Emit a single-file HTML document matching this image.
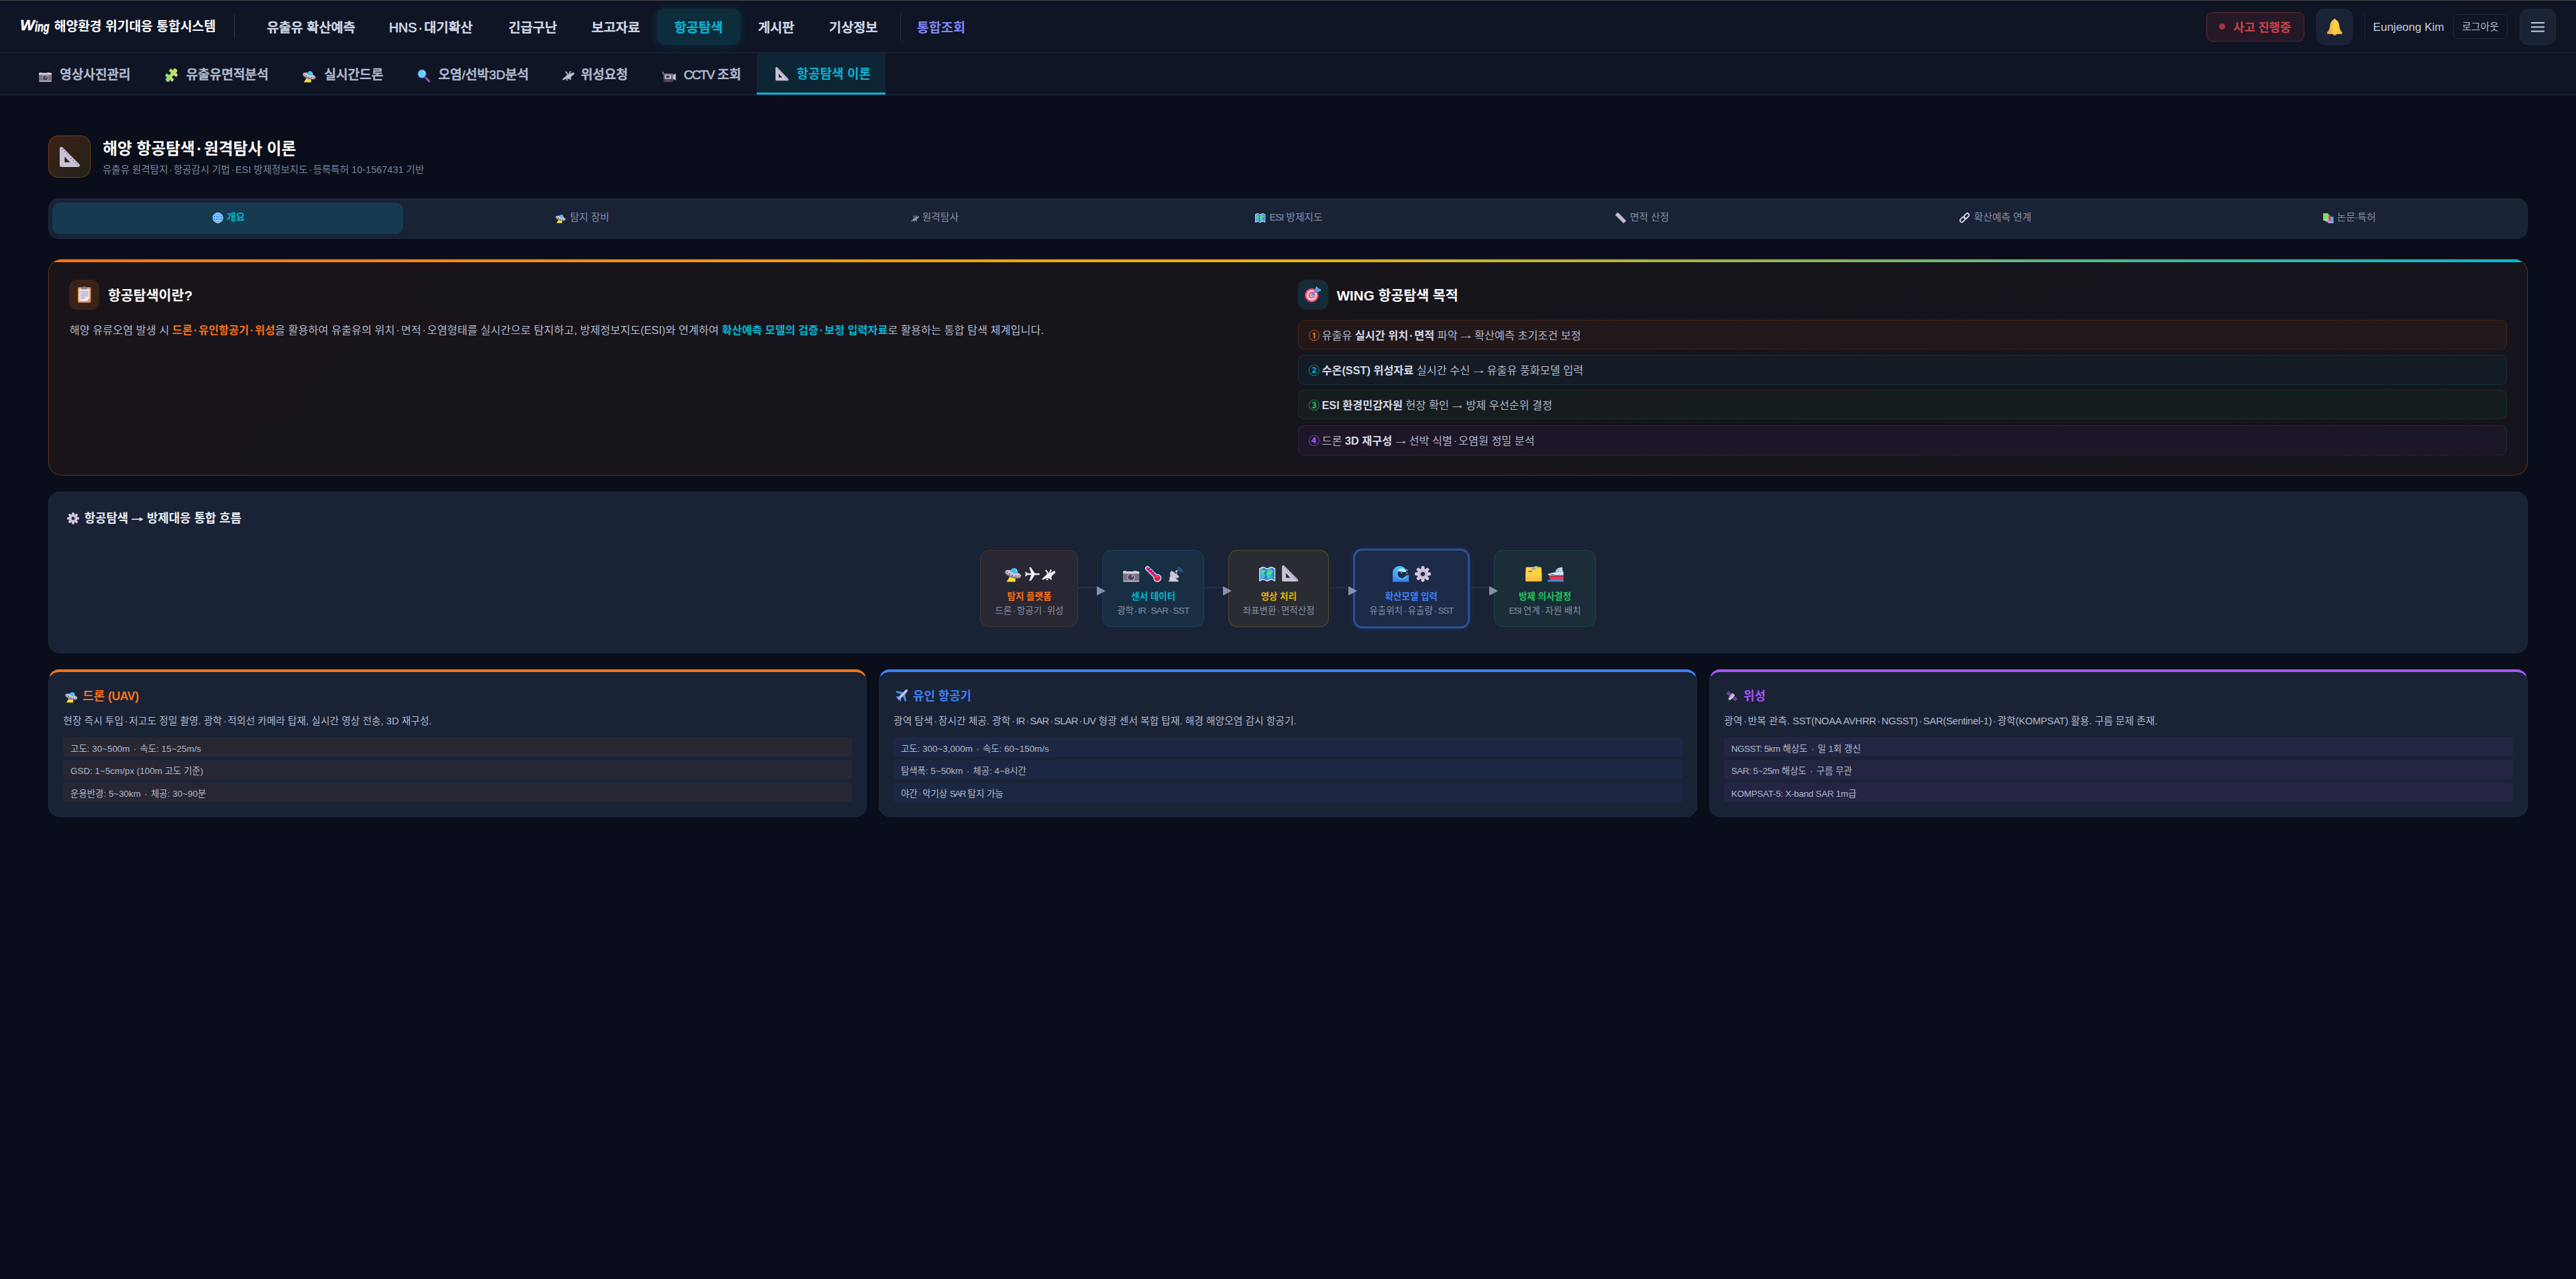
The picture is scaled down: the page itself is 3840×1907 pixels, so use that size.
<!DOCTYPE html>
<html lang="ko">
<head>
<meta charset="utf-8">
<title>해양환경 위기대응 통합시스템</title>
<style>
:root{
  --bg0:#0a0e1a;--bg1:#0f1524;--bg2:#121929;--bg3:#1a2236;--bgH:#1e2844;
  --bd:#1e2a42;--bdL:#2a3a5c;--t1:#edf0f7;--t2:#b0b8cc;--t3:#8690a6;
  --cyan:#06b6d4;--blue:#3b82f6;--red:#ef4444;--orange:#f97316;--yellow:#eab308;--green:#22c55e;--purple:#a855f7;
}
*{box-sizing:border-box;margin:0;padding:0}
html{zoom:1.5;background:var(--bg0);overflow:hidden}
body{width:2560px;height:1271.33px;overflow:hidden;background:var(--bg0);color:var(--t1);
  font-family:"Liberation Sans","Noto Sans CJK KR",sans-serif;font-size:13px;line-height:1.5;position:relative}
svg.ic{position:absolute;display:block;overflow:visible}
.ov{position:absolute;left:0;top:0;width:0;height:0;z-index:9}
i.d{font-style:normal;margin:0 .114em}
b{font-weight:700}
.abs{position:absolute}

/* ---------- top nav ---------- */
.topline{position:absolute;left:0;top:0;width:100%;height:.67px;background:#444546;z-index:5}
.nav{position:absolute;left:0;top:0;width:100%;height:52.67px;background:var(--bg1);border-bottom:1px solid var(--bd)}
.logo{position:absolute;left:20px;top:0;height:52px;display:flex;align-items:center;font-weight:700;font-size:12.85px;color:#fff;white-space:nowrap}
.logo .w{position:relative;display:inline-block;width:33.8px;height:24px;font-style:italic;font-weight:700;-webkit-text-stroke:.3px #fff}
.logo .w b,.logo .w i{position:absolute;top:0;line-height:24px;transform-origin:0 50%;font-style:italic}
.logo .w b{left:.2px;font-size:14.7px;transform:scaleX(1.04);top:-.8px}
.logo .w i{left:14.6px;font-size:12.9px;transform:scaleX(.74);top:.5px}
.logo .tx{position:relative;top:1.2px}
.vsep{position:absolute;left:232.4px;top:14.5px;width:1px;height:24px;background:#2a3a5c}
.menu{position:absolute;left:0;top:8.4px;height:36px}
.menu span{position:absolute;top:0;display:block;padding:1.2px 17.57px 0;height:36px;line-height:36px;font-size:13.1px;font-weight:500;-webkit-text-stroke:.42px currentColor;color:#d3d9e8;border-radius:8px;white-space:nowrap}
.menu span.on{color:var(--cyan);background:rgba(6,182,212,.14);box-shadow:0 0 10px rgba(6,182,212,.16)}
.menu span.tot{color:#8187f5;font-weight:700;-webkit-text-stroke:0;border-left:1px solid #232c55;border-radius:8px 0 0 8px}

.inc{position:absolute;left:2192.9px;top:12px;width:97px;height:29px;border:1px solid rgba(239,68,68,.3);background:rgba(239,68,68,.1);border-radius:6px;color:#cb4047;font-size:11.7px;font-weight:500;-webkit-text-stroke:.35px currentColor;white-space:nowrap}
.inc .dot{position:absolute;left:11.9px;top:10.6px;width:6px;height:6px;border-radius:50%;background:#a5383f}
.inc .tx{position:absolute;left:26px;top:0;line-height:27px;padding-top:1.1px}
.sqb{position:absolute;top:8.6px;width:35.8px;height:35.8px;background:var(--bg3);border:1px solid var(--bd);border-radius:8px}
.usep{position:absolute;left:2350.2px;top:14px;width:.67px;height:24.6px;background:#1e2a42}
.uname{position:absolute;left:2358.4px;top:0;height:52px;line-height:52px;font-size:11.35px;letter-spacing:0;color:#c8cfe0;white-space:nowrap;padding-top:1px}
.logout{position:absolute;left:2438.1px;top:14px;width:53.9px;height:24.4px;border:1px solid var(--bd);border-radius:5px;font-size:10px;line-height:22.4px;color:#b4bccf;text-align:center;padding-top:.9px}

/* ---------- sub nav ---------- */
.sub{position:absolute;left:0;top:52.67px;width:100%;height:41.7px;background:var(--bg1);border-bottom:1px solid var(--bd)}
.sub .t{position:absolute;top:0;height:40.6px;line-height:40.6px;font-size:12.72px;font-weight:500;-webkit-text-stroke:.42px currentColor;color:#b3bbd0;white-space:nowrap;padding-top:2.1px}
.sub .onbg{position:absolute;left:752px;top:0;width:128px;height:41px;background:rgba(6,182,212,.1);border-bottom:2px solid var(--cyan)}
.sub .on{color:var(--cyan);font-weight:700;-webkit-text-stroke:0;padding-top:1.1px}

/* ---------- page header ---------- */
.hicon{position:absolute;left:48.2px;top:134.6px;width:42px;height:42px;border-radius:10px;border:1px solid rgba(249,115,22,.34);background:linear-gradient(135deg,rgba(249,115,22,.2),rgba(234,179,8,.12))}
.htitle{position:absolute;left:102.2px;top:135.2px;font-size:15.8px;font-weight:700;color:#fff;line-height:26px;white-space:nowrap}
.hsub{position:absolute;left:102px;top:160.8px;font-size:9.68px;color:#7a859f;line-height:16px;white-space:nowrap}

/* ---------- tab bar ---------- */
.tabs{position:absolute;left:48.2px;top:197px;width:2463.8px;height:40px;background:var(--bg3);border:1px solid var(--bd);border-radius:10px;padding:3.4px;display:flex;gap:2.8px}
.tabs div.on{width:348.2px;height:31.7px;border-radius:8px;background:rgba(6,182,212,.17)}
.tt{position:absolute;top:207.3px;font-size:9.85px;line-height:18px;color:var(--t3);white-space:nowrap}
.tt.on{color:var(--cyan);font-weight:700}
i.dn{font-style:normal;margin:0 -.16em}
i.ar{font-style:normal;display:inline-block;transform:translateY(-.09em) scaleX(1.5)}

/* ---------- intro card ---------- */
.intro{position:absolute;left:48.2px;top:257.2px;width:2463.8px;height:215.2px;border-radius:13px;border:1px solid rgba(249,115,22,.31);background:linear-gradient(135deg,rgba(249,115,22,.063) 0%,rgba(240,150,60,.05) 100%),var(--bg0);overflow:hidden}
.intro:before{content:"";position:absolute;left:0;top:0;right:0;height:3px;background:linear-gradient(90deg,#f97316 0%,#eab308 50%,#06b6d4 100%)}
.ibox{position:absolute;width:30px;height:30px;border-radius:8px;top:20px}
.ih{position:absolute;top:20px;height:30px;line-height:30px;font-size:13.72px;font-weight:700;color:#fff;white-space:nowrap;padding-top:1px}
.ip{position:absolute;left:20.3px;top:61px;font-size:10.87px;line-height:19px;color:var(--t2);white-space:nowrap}
.ip b.o{color:var(--orange)} .ip b.c{color:var(--cyan)}
.li{position:absolute;left:1241.2px;width:1201px;height:29.9px;border-radius:6px;border:1px solid;font-size:10.85px;line-height:27.5px;color:var(--t2);padding:1.5px 0 0 9.8px;white-space:nowrap}
.li b{color:#d3d8e7}
.li .n{margin-right:-.72px;font-weight:700}

/* ---------- flow card ---------- */
.flow{position:absolute;left:48.2px;top:488.6px;width:2463.8px;height:160.8px;border-radius:11px;border:1px solid var(--bd);background:var(--bg3)}
.fh{position:absolute;left:34.9px;top:17.6px;font-size:11.88px;font-weight:700;color:var(--t1);line-height:18px;white-space:nowrap}
.fh .ar{-webkit-text-stroke:.4px currentColor}
.fb{position:absolute;top:57.6px;height:76.2px;border-radius:9px;border:1px solid;text-align:center;white-space:nowrap}
.fb .e{position:absolute;left:0;right:0;top:14px;height:20px}
.fb .e .ic{position:absolute;top:0}
.fb .a{position:absolute;left:0;right:0;top:38.6px;font-size:9px;font-weight:700;line-height:14px}
.fb .s{position:absolute;left:0;right:0;top:52.6px;font-size:9px;line-height:14px;color:var(--t3)}
.cn{position:absolute;top:95.07px;height:.67px;width:18.6px;background:#2e3a56;z-index:2}
.cn:after{content:"";position:absolute;right:-8.7px;top:-1.7px;border-left:8.8px solid #8791aa;border-top:4.75px solid transparent;border-bottom:4.75px solid transparent}

/* ---------- platform cards ---------- */
.pc{position:absolute;top:665.3px;width:813.3px;height:146.8px;border-radius:11px;border:1px solid var(--bd);border-top:3px solid;background:var(--bg3)}
.pc .h{position:absolute;left:33.3px;top:14.8px;font-size:11.9px;font-weight:700;line-height:19.5px;white-space:nowrap}
.pc .p{position:absolute;left:14px;top:40.6px;font-size:9.85px;line-height:17px;color:var(--t2);white-space:nowrap}
.pc .r{position:absolute;left:14px;right:14px;height:19.5px;border-radius:3px;font-size:8.95px;line-height:19.5px;color:var(--t2);padding:1.8px 0 0 7.2px;white-space:nowrap}
</style>
</head>
<body>
<div class="nav">
  <div class="logo"><span class="w"><b>W</b><i>ing</i></span> <span class="tx">해양환경 위기대응 통합시스템</span></div>
  <div class="vsep"></div>
  <div class="menu">
    <span style="left:247.56px">유출유 확산예측</span>
    <span style="left:369.03px">HNS<i class="d">·</i>대기확산</span>
    <span style="left:487.76px">긴급구난</span>
    <span style="left:570.23px">보고자료</span>
    <span class="on" style="left:652.63px">항공탐색</span>
    <span style="left:735.76px">게시판</span>
    <span style="left:806.50px">기상정보</span>
    <span class="tot" style="left:894.60px;padding-left:15.9px">통합조회</span>
  </div>
  <div class="inc"><span class="dot"></span><span class="tx">사고 진행중</span></div>
  <div class="sqb" style="left:2302.1px"></div>
  <div class="usep"></div>
  <div class="uname">Eunjeong Kim</div>
  <div class="logout">로그아웃</div>
  <div class="sqb" style="left:2504px"><span class="abs" style="left:10.6px;top:12.6px;width:13.6px;height:1.4px;background:#c8cee0;box-shadow:0 4.2px 0 #c8cee0,0 8.4px 0 #c8cee0"></span></div>
</div>
<div class="topline"></div>

<div class="sub">
  <div class="t" style="left:59.5px">영상사진관리</div>
  <div class="t" style="left:185px">유출유면적분석</div>
  <div class="t" style="left:322.3px">실시간드론</div>
  <div class="t" style="left:435.6px">오염/선박3D분석</div>
  <div class="t" style="left:577.3px">위성요청</div>
  <div class="t" style="left:679.5px"><span style="letter-spacing:-1.15px">CCTV</span> 조회</div>
  <div class="onbg"></div>
  <div class="t on" style="left:791.6px">항공탐색 이론</div>
</div>

<div class="hicon"></div>
<div class="htitle">해양 항공탐색<i class="d">·</i>원격탐사 이론</div>
<div class="hsub">유출유 원격탐지<i class="d">·</i>항공감시 기법<i class="d">·</i>ESI 방제정보지도<i class="d">·</i>등록특허 10-1567431 기반</div>

<div class="tabs"><div class="on"></div></div>
<div class="tt on" style="left:225.2px">개요</div>
<div class="tt" style="left:566.5px">탐지 장비</div>
<div class="tt" style="left:916.5px">원격탐사</div>
<div class="tt" style="left:1261.6px"><span style="letter-spacing:-.7px">ESI</span> 방제지도</div>
<div class="tt" style="left:1619.8px">면적 산정</div>
<div class="tt" style="left:1961.7px">확산예측 연계</div>
<div class="tt" style="left:2322.4px">논문<i class="dn"><i class="d">·</i></i>특허</div>

<div class="intro">
  <div class="ibox" style="left:20px;background:rgba(249,115,22,.15)"></div>
  <div class="ih" style="left:58.4px">항공탐색이란?</div>
  <div class="ip">해양 유류오염 발생 시 <b class="o">드론<i class="d">·</i>유인항공기<i class="d">·</i>위성</b>을 활용하여 유출유의 위치<i class="d">·</i>면적<i class="d">·</i>오염형태를 실시간으로 탐지하고, 방제정보지도(ESI)와 연계하여 <b class="c">확산예측 모델의 검증<i class="d">·</i>보정 입력자료</b>로 활용하는 통합 탐색 체계입니다.</div>

  <div class="ibox" style="left:1241.2px;background:rgba(6,182,212,.15)"></div>
  <div class="ih" style="left:1279.6px">WING 항공탐색 목적</div>
  <div class="li" style="top:59.9px;background:rgba(249,115,22,.05);border-color:rgba(249,115,22,.15)"><span class="n" style="color:var(--orange)">①</span> 유출유 <b>실시간 위치<i class="d">·</i>면적</b> 파악 <i class="ar">→</i> 확산예측 초기조건 보정</div>
  <div class="li" style="top:94.6px;background:rgba(6,182,212,.05);border-color:rgba(6,182,212,.15)"><span class="n" style="color:var(--cyan)">②</span> <b>수온(SST) 위성자료</b> 실시간 수신 <i class="ar">→</i> 유출유 풍화모델 입력</div>
  <div class="li" style="top:129.2px;background:rgba(34,197,94,.05);border-color:rgba(34,197,94,.15)"><span class="n" style="color:var(--green)">③</span> <b>ESI 환경민감자원</b> 현장 확인 <i class="ar">→</i> 방제 우선순위 결정</div>
  <div class="li" style="top:164.9px;background:rgba(168,85,247,.05);border-color:rgba(168,85,247,.15)"><span class="n" style="color:var(--purple)">④</span> 드론 <b>3D 재구성</b> <i class="ar">→</i> 선박 식별<i class="d">·</i>오염원 정밀 분석</div>
</div>

<div class="flow">
  <div class="fh">항공탐색 <i class="ar">→</i> 방제대응 통합 흐름</div>

  <div class="fb" style="left:925.4px;width:97.4px;background:rgba(249,115,22,.07);border-color:rgba(249,115,22,.15)">
    <div class="e"></div>
    <div class="a" style="color:var(--orange)">탐지 플랫폼</div><div class="s">드론<i class="d">·</i>항공기<i class="d">·</i>위성</div>
  </div>
  <div class="cn" style="left:1022.8px"></div>
  <div class="fb" style="left:1046.6px;width:101.4px;background:rgba(6,182,212,.085);border-color:rgba(6,182,212,.15)">
    <div class="e"></div>
    <div class="a" style="color:var(--cyan)">센서 데이터</div><div class="s" style="letter-spacing:-.4px">광학<i class="d">·</i>IR<i class="d">·</i>SAR<i class="d">·</i>SST</div>
  </div>
  <div class="cn" style="left:1148px"></div>
  <div class="fb" style="left:1172px;width:99.8px;background:rgba(234,179,8,.07);border-color:rgba(234,179,8,.24)">
    <div class="e"></div>
    <div class="a" style="color:var(--yellow)">영상 처리</div><div class="s">좌표변환<i class="d">·</i>면적산정</div>
  </div>
  <div class="cn" style="left:1272.4px"></div>
  <div class="fb" style="left:1295.6px;width:116.2px;top:56px;height:79.4px;border-width:2px;background:rgba(59,130,246,.1);border-color:rgba(59,130,246,.45);box-shadow:0 0 6px rgba(59,130,246,.18)">
    <div class="e"></div>
    <div class="a" style="color:var(--blue)">확산모델 입력</div><div class="s">유출위치<i class="d">·</i>유출량<i class="d">·</i><span style="letter-spacing:-.75px">SST</span></div>
  </div>
  <div class="cn" style="left:1412.4px"></div>
  <div class="fb" style="left:1436px;width:101px;background:rgba(34,197,94,.07);border-color:rgba(34,197,94,.15)">
    <div class="e"></div>
    <div class="a" style="color:var(--green)">방제 의사결정</div><div class="s"><span style="letter-spacing:-.9px">ESI</span> 연계<i class="d">·</i>자원 배치</div>
  </div>
</div>

<div class="pc" style="left:48.2px;border-top-color:var(--orange)">
  <div class="h" style="color:var(--orange)">드론 <span style="letter-spacing:-.35px">(UAV)</span></div>
  <div class="p">현장 즉시 투입<i class="d">·</i>저고도 정밀 촬영. 광학<i class="d">·</i>적외선 카메라 탑재, 실시간 영상 전송, 3D 재구성.</div>
  <div class="r" style="top:64.85px;background:rgba(249,115,22,.06)">고도: 30~500m <i class="d">·</i> 속도: 15~25m/s</div>
  <div class="r" style="top:87.1px;background:rgba(249,115,22,.06)">GSD: 1~5cm/px (100m 고도 기준)</div>
  <div class="r" style="top:109.9px;background:rgba(249,115,22,.06)">운용반경: 5~30km <i class="d">·</i> 체공: 30~90분</div>
</div>
<div class="pc" style="left:873.4px;border-top-color:var(--blue)">
  <div class="h" style="color:var(--blue)">유인 항공기</div>
  <div class="p">광역 탐색<i class="d">·</i>장시간 체공. 광학<i class="d">·</i><span style="letter-spacing:-.48px">IR<i class="d">·</i>SAR<i class="d">·</i>SLAR<i class="d">·</i>UV</span> 형광 센서 복합 탑재. 해경 해양오염 감시 항공기.</div>
  <div class="r" style="top:64.85px;background:rgba(59,130,246,.07)">고도: 300~3,000m <i class="d">·</i> 속도: 60~150m/s</div>
  <div class="r" style="top:87.1px;background:rgba(59,130,246,.07)">탐색폭: 5~50km <i class="d">·</i> 체공: 4~8시간</div>
  <div class="r" style="top:109.9px;background:rgba(59,130,246,.07)">야간<i class="d">·</i>악기상 <span style="letter-spacing:-1px">SAR</span> 탐지 가능</div>
</div>
<div class="pc" style="left:1698.7px;border-top-color:var(--purple)">
  <div class="h" style="color:var(--purple)">위성</div>
  <div class="p">광역<i class="d">·</i>반복 관측. <span style="letter-spacing:-.19px">SST(NOAA AVHRR<i class="d">·</i>NGSST)<i class="d">·</i>SAR(Sentinel-1)</span><i class="d">·</i>광학<span style="letter-spacing:-.19px">(KOMPSAT)</span> 활용. 구름 문제 존재.</div>
  <div class="r" style="top:64.85px;background:rgba(168,85,247,.07)"><span style="letter-spacing:-.3px">NGSST: 5km</span> 해상도 <i class="d">·</i> 일 1회 갱신</div>
  <div class="r" style="top:87.1px;background:rgba(168,85,247,.07)"><span style="letter-spacing:-.34px">SAR: 5~25m</span> 해상도 <i class="d">·</i> 구름 무관</div>
  <div class="r" style="top:109.9px;background:rgba(168,85,247,.07)"><span style="letter-spacing:-.165px">KOMPSAT-5: X-band SAR 1m</span>급</div>
</div>


<div class="ov">
<svg class="ic" style="left:38.67px;top:72.13px;width:12.73px;height:9.27px" viewBox="2 6.3 28 20.2" preserveAspectRatio="none" aria-hidden="true"><rect x="2.6" y="6.3" width="5" height="2" rx=".6" fill="#bdb4c9"/><rect x="20" y="6.3" width="6" height="2" rx=".6" fill="#bdb4c9"/><rect x="2" y="7.5" width="28" height="18.5" rx="1.6" fill="#79737f"/><path d="M2 11.5V9.1c0-.9.7-1.6 1.6-1.6h24.8c.9 0 1.6.7 1.6 1.6v2.4z" fill="#dad1e4"/><path d="M2 24.4h28v.5c0 .9-.7 1.6-1.6 1.6H3.6C2.7 26.5 2 25.8 2 24.9z" fill="#cbbfd8"/><circle cx="15.8" cy="18.2" r="6.9" fill="#a8a1b2"/><circle cx="15.8" cy="18.2" r="5.1" fill="#453a55"/><circle cx="15.8" cy="18.2" r="3.2" fill="#5a4b6d"/><circle cx="17.9" cy="16.1" r="1.1" fill="#efe9f5"/></svg>
<svg class="ic" style="left:163.93px;top:68.2px;width:12.8px;height:13.33px" viewBox="4.7 4.6 23.1 23.8" preserveAspectRatio="none" aria-hidden="true"><defs><linearGradient id="pzg2" gradientUnits="userSpaceOnUse" x1="3" y1="27" x2="29" y2="5"><stop offset="0" stop-color="#63e07a"/><stop offset=".5" stop-color="#b0e05a"/><stop offset="1" stop-color="#ece04c"/></linearGradient></defs><g transform="rotate(40 16 16)"><path d="M8 8H13.8a3.3 3.3 0 1 1 4.4 0H24V13.8a3.3 3.3 0 1 0 0 4.4V24H18.2a3.3 3.3 0 1 1-4.4 0H8V18.2a3.3 3.3 0 1 0 0-4.4z" fill="#d7b5ee" transform="translate(1.1 .5)"/></g><g transform="rotate(40 16 16)"><path d="M8 8H13.8a3.3 3.3 0 1 1 4.4 0H24V13.8a3.3 3.3 0 1 0 0 4.4V24H18.2a3.3 3.3 0 1 1-4.4 0H8V18.2a3.3 3.3 0 1 0 0-4.4z" fill="url(#pzg2)"/></g></svg>
<svg class="ic" style="left:300.47px;top:70.4px;width:13.13px;height:11.13px" viewBox="0 2.2 27.4 24.3" preserveAspectRatio="none" aria-hidden="true"><path d="M8.6 16.8l9.2 2.3v7.4H2.8z" fill="#fbe034"/><path d="M8.6 16.8l9.2 2.3v2l-10.6-1.5z" fill="#f0c52a"/><g transform="rotate(19 14 12)"><ellipse cx="14" cy="14.3" rx="13.9" ry="5.2" fill="#7f7888"/><ellipse cx="14" cy="12" rx="14" ry="4.8" fill="#cdc7d3"/><path d="M7.8 9.6C7.8 5.1 10.6 2 14 2s6.2 3.1 6.2 7.6c-1.7 1.3-10.7 1.3-12.4 0z" fill="#3fc0f2"/><path d="M16 3.6c1.4.6 2.4 1.9 2.9 3.5" stroke="#c8f1ff" stroke-width="1.1" fill="none" stroke-linecap="round"/><g fill="#3e3453"><ellipse cx="3.6" cy="12.7" rx="1" ry=".8"/><ellipse cx="8.3" cy="14.5" rx="1.1" ry=".9"/><ellipse cx="14" cy="15.2" rx="1.1" ry=".9"/><ellipse cx="19.7" cy="14.5" rx="1.1" ry=".9"/><ellipse cx="24.4" cy="12.7" rx="1" ry=".8"/></g></g></svg>
<svg class="ic" style="left:414.53px;top:68.4px;width:12.87px;height:13.13px" viewBox="2 2 28.6 28.6" preserveAspectRatio="none" aria-hidden="true"><path d="M18.5 18.5l9.8 9.8" stroke="#9a52b8" stroke-width="4.6" stroke-linecap="round"/><path d="M18 18l4 4" stroke="#7a3f98" stroke-width="4.6"/><circle cx="12.4" cy="12.4" r="10.4" fill="#4a3a7a"/><circle cx="12.4" cy="12.4" r="8.5" fill="#5fd2f7"/><path d="M14.5 6.3c2 .7 3.4 2.2 4 4" stroke="#dff8ff" stroke-width="1.7" fill="none" stroke-linecap="round"/></svg>
<svg class="ic" style="left:558.67px;top:70.73px;width:12.07px;height:9.33px;color:#b9c0d6" viewBox="0 -0.3 27.8 23.3" preserveAspectRatio="none" aria-hidden="true"><g fill="currentColor"><circle cx="14.8" cy="13.6" r="5.7"/><path d="M15.5 8.5L26.4 2.2l1.4 4.8-7.6 7z"/><path d="M0 20.4l9.2-9 3.6 5.2-10.2 5.4z"/><path d="M6.6 1.3L9.4.3l4.6 7.2-2.4 1.5z"/><path d="M17.8-.3l2.9 1-4 8.1-2.5-1z"/><path d="M10.4 17.4l3.2 5.2-4.6.4zM15 18.3l4.6 4.5 1.2-4.8z"/></g></svg>
<svg class="ic" style="left:657.67px;top:71.13px;width:13.6px;height:10.27px" viewBox="1.8 4.8 28.5 20.4" preserveAspectRatio="none" aria-hidden="true"><path d="M1.8 5.2l2.6-.4 1.6 5.4-2 .4z" fill="#8e889a"/><rect x="5" y="8" width="20" height="14.5" rx="2.2" fill="#77688a"/><path d="M24.5 11.2l5.8-2.7v13.4l-5.8-2.7z" fill="#c9c1d3"/><rect x="8.5" y="10.6" width="11.5" height="8" rx="1.2" fill="#e4dcee"/><rect x="10.2" y="12.2" width="7.4" height="4.7" rx=".7" fill="#3d3350"/><path d="M5 19.5h20V23c0 1.2-1 2.2-2.2 2.2H7.2C6 25.2 5 24.2 5 23z" fill="#4b3f5c"/><circle cx="12" cy="22.4" r=".9" fill="#9a8fb0"/><circle cx="16" cy="22.4" r=".9" fill="#f0485a"/></svg>
<svg class="ic" style="left:770.53px;top:66.47px;width:13px;height:13.47px" viewBox="5 3.4 24.4 24.6" preserveAspectRatio="none" aria-hidden="true"><path fill-rule="evenodd" d="M5 5.5c0-1.9 2.1-2.8 3.5-1.5l20.3 20.6c1.3 1.3.4 3.4-1.4 3.4H7c-1.1 0-2-.9-2-2zM11 15.3v7.1h6.6z" fill="#c9c3d1"/><g fill="#a06cf2"><circle cx="8.6" cy="6.6" r=".85"/><circle cx="11.2" cy="9.3" r=".85"/><circle cx="13.8" cy="12" r=".85"/><circle cx="16.4" cy="14.7" r=".85"/><circle cx="19" cy="17.4" r=".85"/><circle cx="21.6" cy="20.1" r=".85"/><circle cx="24.2" cy="22.8" r=".85"/><circle cx="26.6" cy="25.3" r=".85"/></g></svg>
<svg class="ic" style="left:2312.47px;top:18.73px;width:15px;height:16.6px" viewBox="2 1.2 28 29.6" preserveAspectRatio="none" aria-hidden="true"><defs><linearGradient id="blg8" x1="0" y1="0" x2="1" y2="0"><stop offset="0" stop-color="#f3993a"/><stop offset=".55" stop-color="#ffd84a"/><stop offset="1" stop-color="#f7b23c"/></linearGradient></defs><ellipse cx="16" cy="28.6" rx="3.4" ry="2.2" fill="#f08a35"/><path d="M16 1.2c-1.2 0-2.1.9-2.3 2C9.6 4.5 7.8 8.6 7.4 13.4 7 18.6 5 22.5 2.4 24.8c-.3.3-.4.6-.4 1V27c0 .7.5 1.2 1.2 1.2h25.6c.7 0 1.2-.5 1.2-1.2v-1.2c0-.4-.1-.7-.4-1-2.6-2.3-4.6-6.2-5-11.4-.4-4.8-2.2-8.9-6.3-10.2-.2-1.1-1.1-2-2.3-2z" fill="url(#blg8)"/><path d="M3 24.3h26" stroke="#f0a030" stroke-width=".9" opacity=".6"/></svg>
<svg class="ic" style="left:59.2px;top:146.07px;width:20px;height:19.93px" viewBox="5 3.4 24.4 24.6" preserveAspectRatio="none" aria-hidden="true"><path fill-rule="evenodd" d="M5 5.5c0-1.9 2.1-2.8 3.5-1.5l20.3 20.6c1.3 1.3.4 3.4-1.4 3.4H7c-1.1 0-2-.9-2-2zM11 15.3v7.1h6.6z" fill="#c9c3d1"/><g fill="#a06cf2"><circle cx="8.6" cy="6.6" r=".85"/><circle cx="11.2" cy="9.3" r=".85"/><circle cx="13.8" cy="12" r=".85"/><circle cx="16.4" cy="14.7" r=".85"/><circle cx="19" cy="17.4" r=".85"/><circle cx="21.6" cy="20.1" r=".85"/><circle cx="24.2" cy="22.8" r=".85"/><circle cx="26.6" cy="25.3" r=".85"/></g></svg>
<svg class="ic" style="left:211.13px;top:211.13px;width:10.4px;height:10.4px" viewBox="2 2 28 28" preserveAspectRatio="none" aria-hidden="true"><circle cx="16" cy="16" r="14" fill="#3793ee"/><g fill="none" stroke="#c4e6ff" stroke-width="1.5"><circle cx="16" cy="16" r="13.2"/><ellipse cx="16" cy="16" rx="6.2" ry="13.2"/><path d="M16 2.8v26.4M2.8 16h26.4M4.6 9.4h22.8M4.6 22.6h22.8"/></g></svg>
<svg class="ic" style="left:551.93px;top:213.07px;width:10.2px;height:8.27px" viewBox="0 2.2 27.4 24.3" preserveAspectRatio="none" aria-hidden="true"><path d="M8.6 16.8l9.2 2.3v7.4H2.8z" fill="#fbe034"/><path d="M8.6 16.8l9.2 2.3v2l-10.6-1.5z" fill="#f0c52a"/><g transform="rotate(19 14 12)"><ellipse cx="14" cy="14.3" rx="13.9" ry="5.2" fill="#7f7888"/><ellipse cx="14" cy="12" rx="14" ry="4.8" fill="#cdc7d3"/><path d="M7.8 9.6C7.8 5.1 10.6 2 14 2s6.2 3.1 6.2 7.6c-1.7 1.3-10.7 1.3-12.4 0z" fill="#3fc0f2"/><path d="M16 3.6c1.4.6 2.4 1.9 2.9 3.5" stroke="#c8f1ff" stroke-width="1.1" fill="none" stroke-linecap="round"/><g fill="#3e3453"><ellipse cx="3.6" cy="12.7" rx="1" ry=".8"/><ellipse cx="8.3" cy="14.5" rx="1.1" ry=".9"/><ellipse cx="14" cy="15.2" rx="1.1" ry=".9"/><ellipse cx="19.7" cy="14.5" rx="1.1" ry=".9"/><ellipse cx="24.4" cy="12.7" rx="1" ry=".8"/></g></g></svg>
<svg class="ic" style="left:905.33px;top:213.73px;width:8.07px;height:6.4px;color:#8c96b0" viewBox="0 -0.3 27.8 23.3" preserveAspectRatio="none" aria-hidden="true"><g fill="currentColor"><circle cx="14.8" cy="13.6" r="5.7"/><path d="M15.5 8.5L26.4 2.2l1.4 4.8-7.6 7z"/><path d="M0 20.4l9.2-9 3.6 5.2-10.2 5.4z"/><path d="M6.6 1.3L9.4.3l4.6 7.2-2.4 1.5z"/><path d="M17.8-.3l2.9 1-4 8.1-2.5-1z"/><path d="M10.4 17.4l3.2 5.2-4.6.4zM15 18.3l4.6 4.5 1.2-4.8z"/></g></svg>
<svg class="ic" style="left:1247.27px;top:211.93px;width:10.2px;height:9.2px" viewBox="1.5 3.8 29 25.8" preserveAspectRatio="none" aria-hidden="true"><path d="M1.5 6.4C4.18 6.4 6.07 3.8 8.75 3.8C11.43 3.8 13.32 6.4 16 6.4C18.68 6.4 20.57 3.8 23.25 3.8C25.93 3.8 27.82 6.4 30.5 6.4L30.5 29.6C27.82 29.6 25.93 27 23.25 27C20.57 27 18.68 29.6 16 29.6C13.32 29.6 11.43 27 8.75 27C6.07 27 4.18 29.6 1.5 29.6z" fill="#f3e0f1"/><path d="M3 8.1C4.18 8.1 6.07 5.5 8.75 5.5L8.75 25.3C6.07 25.3 4.18 27.9 3 27.9z" fill="#48a5f5"/><path d="M8.75 5.5C11.43 5.5 13.32 8.1 16 8.1L16 27.9C13.32 27.9 11.43 25.3 8.75 25.3z" fill="#2384dc"/><path d="M16 8.1C18.68 8.1 20.57 5.5 23.25 5.5L23.25 25.3C20.57 25.3 18.68 27.9 16 27.9z" fill="#48a5f5"/><path d="M23.25 5.5C25.93 5.5 27.82 8.1 29 8.1L29 27.9C27.82 27.9 25.93 25.3 23.25 25.3z" fill="#2384dc"/><path d="M4.4 11.6c1.4-1.4 3.4-2 5.1-1.5l3.6-.9c.7 1.3-.4 2.7-2 3.3.5 1.3-.5 2.7-2.2 3.1 1.2 1.4 2.7 1.8 3.2 3.4-.4 1.9-1.9 2.8-2.9 4.6-1.2-1.3-.9-3.6-1.8-5.4-1.4-1.6-2.9-3.5-3-6.6zM15 14c1.2-2.3 3.2-2.7 5-4 1.9-.8 4.5-.5 6 .6.6 1.7-.6 2.8-.6 4.4-1.2 1-2.1 2.3-3.4 2.5-1.2.8-2.3.7-2.9 2.3-.3 1.7-.3 3.6-1.8 4.1-1.6-.9-.9-3.2-2-4.7-1-1.5-1.4-3.3-.3-5.2zM23 20h3.3l-.5 1.6h-2.1zM23.2 23.8c.8-1.3 2.2-1.3 2.9.1-.3 1.1-2.3 1.2-2.9-.1z" fill="#52d986"/></svg>
<svg class="ic" style="left:1605.2px;top:211.07px;width:10.53px;height:10.47px" viewBox="-0.9 -0.6 33.5 33.5" preserveAspectRatio="none" aria-hidden="true"><g transform="rotate(45 16 16)"><rect x="-3" y="10.2" width="38" height="11.6" rx="2.3" fill="#cdc6d5"/><rect x="-3" y="18.6" width="38" height="3.2" rx="1.6" fill="#b5adbf"/><g stroke="#a06cf2" stroke-width="1.4" stroke-linecap="round"><path d="M1 10.8v3.6M5 10.8v2.2M9 10.8v3.6M13 10.8v2.2M17 10.8v3.6M21 10.8v2.2M25 10.8v3.6M29 10.8v2.2M33 10.8v3.6"/></g></g></svg>
<svg class="ic" style="left:1947.6px;top:211.27px;width:10.07px;height:10.27px" viewBox="-1.2 0.3 34.4 31.4" preserveAspectRatio="none" aria-hidden="true"><g fill="none" stroke="#d8cfe2" stroke-width="4.2" stroke-linecap="round"><rect x="-2" y="10.5" width="19" height="11" rx="5.5" transform="rotate(-40 16 16)"/><rect x="15" y="10.5" width="19" height="11" rx="5.5" transform="rotate(-40 16 16)"/></g></svg>
<svg class="ic" style="left:2308.47px;top:211.93px;width:10.33px;height:9.6px" viewBox="2 2 27.5 28" preserveAspectRatio="none" aria-hidden="true"><rect x="14" y="11.5" width="15.5" height="18.5" rx="1.8" fill="#38b6f5"/><path d="M14 26h15.5v2.2c0 1-.8 1.8-1.8 1.8H15.8c-1 0-1.8-.8-1.8-1.8z" fill="#b9a6f2"/><rect x="8" y="6.5" width="14" height="20" rx="1.8" fill="#f0325f"/><path d="M8 23h14v1.7c0 1-.8 1.8-1.8 1.8H9.8c-1 0-1.8-.8-1.8-1.8z" fill="#e08ab0"/><rect x="2" y="2" width="14.5" height="21" rx="1.8" fill="#7be06a"/><path d="M2 19.3h14.5v1.9c0 1-.8 1.8-1.8 1.8H3.8c-1 0-1.8-.8-1.8-1.8z" fill="#cfc6d8"/></svg>
<svg class="ic" style="left:77.13px;top:284.87px;width:13px;height:16.13px" viewBox="4 2.2 24 28.8" preserveAspectRatio="none" aria-hidden="true"><rect x="4" y="3.6" width="24" height="27.4" rx="2" fill="#dd9457"/><path d="M6.3 6.5h19.4v16.5l-5.7 5.7H6.3z" fill="#e9e1f2"/><path d="M20 28.7v-4c0-1 .7-1.7 1.7-1.7h4z" fill="#f7f2fb"/><path d="M10.5 7.7V5.5c0-.6.5-1.1 1.1-1.1h2.3C14.2 3 15 2.2 16 2.2s1.8.8 2.1 2.2h2.3c.6 0 1.1.5 1.1 1.1v2.2z" fill="#8b8494"/><g stroke="#a39bb0" stroke-width="1.5" stroke-linecap="round"><path d="M9.5 12h13M9.5 15.5h13M9.5 19h13M9.5 22.5h6.5"/></g></svg>
<svg class="ic" style="left:1296.8px;top:284.87px;width:16.07px;height:15.8px" viewBox="0.4 1.5 30.8 29.7" preserveAspectRatio="none" aria-hidden="true"><circle cx="13.6" cy="18" r="13.2" fill="#f2456d"/><circle cx="13.6" cy="18" r="9.7" fill="#efe4f2"/><circle cx="13.6" cy="18" r="6.4" fill="#f2456d"/><circle cx="13.6" cy="18" r="3.2" fill="#efe4f2"/><circle cx="13.6" cy="18" r="1.2" fill="#8f86a0"/><path d="M13.6 18L24 7.6" stroke="#3f95f2" stroke-width="3" stroke-linecap="round"/><path d="M20.5 6.5l2.2-5 3 3.5 4.5 1.5 1 2.8-5 2.2-2.8-.5-2.4-2.5z" fill="#3f95f2"/><path d="M22.7 1.5l3 3.5-3.8 3.8-1.4-2.3zM30.2 6.5l1 2.8-5 2.2-2.8-.5z" fill="#66b6ff"/></svg>
<svg class="ic" style="left:66.87px;top:509.27px;width:12px;height:11.87px" viewBox="1 1 30 30" preserveAspectRatio="none" aria-hidden="true"><g fill="#d5c9e1"><rect x="12.9" y="1" width="6.2" height="9" rx="2.6" transform="rotate(0 16 16)"/><rect x="12.9" y="1" width="6.2" height="9" rx="2.6" transform="rotate(45 16 16)"/><rect x="12.9" y="1" width="6.2" height="9" rx="2.6" transform="rotate(90 16 16)"/><rect x="12.9" y="1" width="6.2" height="9" rx="2.6" transform="rotate(135 16 16)"/><rect x="12.9" y="1" width="6.2" height="9" rx="2.6" transform="rotate(180 16 16)"/><rect x="12.9" y="1" width="6.2" height="9" rx="2.6" transform="rotate(225 16 16)"/><rect x="12.9" y="1" width="6.2" height="9" rx="2.6" transform="rotate(270 16 16)"/><rect x="12.9" y="1" width="6.2" height="9" rx="2.6" transform="rotate(315 16 16)"/><path fill-rule="evenodd" d="M16 5.8a10.2 10.2 0 1 0 0 20.4 10.2 10.2 0 0 0 0-20.4zm0 6.2a4 4 0 1 1 0 8 4 4 0 0 1 0-8z"/></g><circle cx="16" cy="16" r="5.9" fill="none" stroke="#b9adc7" stroke-width="3" opacity=".75"/></svg>
<svg class="ic" style="left:998.53px;top:564.93px;width:16.13px;height:13.67px" viewBox="0 2.2 27.4 24.3" preserveAspectRatio="none" aria-hidden="true"><path d="M8.6 16.8l9.2 2.3v7.4H2.8z" fill="#fbe034"/><path d="M8.6 16.8l9.2 2.3v2l-10.6-1.5z" fill="#f0c52a"/><g transform="rotate(19 14 12)"><ellipse cx="14" cy="14.3" rx="13.9" ry="5.2" fill="#7f7888"/><ellipse cx="14" cy="12" rx="14" ry="4.8" fill="#cdc7d3"/><path d="M7.8 9.6C7.8 5.1 10.6 2 14 2s6.2 3.1 6.2 7.6c-1.7 1.3-10.7 1.3-12.4 0z" fill="#3fc0f2"/><path d="M16 3.6c1.4.6 2.4 1.9 2.9 3.5" stroke="#c8f1ff" stroke-width="1.1" fill="none" stroke-linecap="round"/><g fill="#3e3453"><ellipse cx="3.6" cy="12.7" rx="1" ry=".8"/><ellipse cx="8.3" cy="14.5" rx="1.1" ry=".9"/><ellipse cx="14" cy="15.2" rx="1.1" ry=".9"/><ellipse cx="19.7" cy="14.5" rx="1.1" ry=".9"/><ellipse cx="24.4" cy="12.7" rx="1" ry=".8"/></g></g></svg>
<svg class="ic" style="left:1018.53px;top:563.67px;width:14.53px;height:13.27px;color:#f1f2f8" viewBox="0 0 27.3 23.8" preserveAspectRatio="none" aria-hidden="true"><path fill="currentColor" d="M0 8h1.9l2.7 2.4h7L7.7 0H11l7.3 10.4h6.4c1.5 0 2.6.6 2.6 1.5s-1.1 1.5-2.6 1.5h-6.4L11 23.8H7.7l3.9-10.4h-7L1.9 15.8H0l1.3-3.9z"/></svg>
<svg class="ic" style="left:1035.13px;top:565.73px;width:13.47px;height:10.8px;color:#f1f2f8" viewBox="0 -0.3 27.8 23.3" preserveAspectRatio="none" aria-hidden="true"><g fill="currentColor"><circle cx="14.8" cy="13.6" r="5.7"/><path d="M15.5 8.5L26.4 2.2l1.4 4.8-7.6 7z"/><path d="M0 20.4l9.2-9 3.6 5.2-10.2 5.4z"/><path d="M6.6 1.3L9.4.3l4.6 7.2-2.4 1.5z"/><path d="M17.8-.3l2.9 1-4 8.1-2.5-1z"/><path d="M10.4 17.4l3.2 5.2-4.6.4zM15 18.3l4.6 4.5 1.2-4.8z"/></g></svg>
<svg class="ic" style="left:1116px;top:567.27px;width:16.2px;height:10.93px" viewBox="2 6.3 28 20.2" preserveAspectRatio="none" aria-hidden="true"><rect x="2.6" y="6.3" width="5" height="2" rx=".6" fill="#bdb4c9"/><rect x="20" y="6.3" width="6" height="2" rx=".6" fill="#bdb4c9"/><rect x="2" y="7.5" width="28" height="18.5" rx="1.6" fill="#79737f"/><path d="M2 11.5V9.1c0-.9.7-1.6 1.6-1.6h24.8c.9 0 1.6.7 1.6 1.6v2.4z" fill="#dad1e4"/><path d="M2 24.4h28v.5c0 .9-.7 1.6-1.6 1.6H3.6C2.7 26.5 2 25.8 2 24.9z" fill="#cbbfd8"/><circle cx="15.8" cy="18.2" r="6.9" fill="#a8a1b2"/><circle cx="15.8" cy="18.2" r="5.1" fill="#453a55"/><circle cx="15.8" cy="18.2" r="3.2" fill="#5a4b6d"/><circle cx="17.9" cy="16.1" r="1.1" fill="#efe9f5"/></svg>
<svg class="ic" style="left:1137.87px;top:562.6px;width:16.27px;height:16px" viewBox="0.9 0.9 29.2 29.3" preserveAspectRatio="none" aria-hidden="true"><g transform="rotate(-45 16 16)"><rect x="11.8" y="-3.5" width="8.4" height="27" rx="4.2" fill="#a9e1fb"/><circle cx="16" cy="25.5" r="7.4" fill="#a9e1fb"/><rect x="13.6" y="-1.6" width="4.8" height="25" rx="2.4" fill="#ea1a7f"/><circle cx="16" cy="25.5" r="5.5" fill="#f2193f"/><circle cx="17.5" cy="23.5" r="1.6" fill="#ff8a9a" opacity=".8"/><g stroke="#3d2a5c" stroke-width="1.4" stroke-linecap="round"><path d="M17 3.5h2.5M17 8.5h2.5M17 13.5h2.5"/></g></g></svg>
<svg class="ic" style="left:1161px;top:564.07px;width:14.07px;height:14.13px" viewBox="1 -1 28.3 31" preserveAspectRatio="none" aria-hidden="true"><g fill="none" stroke="#2f6fe0" stroke-width="1.9" stroke-linecap="round"><path d="M19.5 3.2a6.5 6.5 0 0 1 5.3 5.3"/><path d="M20.5 0a10 10 0 0 1 7.8 7.8"/></g><path d="M3 19.5l4-1.5 12.5 8.5v2H3z" fill="#ddd5e6"/><rect x="1" y="27" width="20" height="3" rx="1" fill="#cdbfdb"/><path d="M17.2 7.8L8 11l9.2 3.5z" fill="none" stroke="#b7afc2" stroke-width="1.1"/><path d="M17.2 7.3V17" stroke="#b7afc2" stroke-width="1.3"/><path d="M5.8 7.5C2.3 12.5 3.5 19 8.5 22c4 2.4 9.3 1.5 12.8-1.9z" fill="#cfc6d8"/><path d="M5.8 7.5l15.5 12.6c.5-.5.9-1 1.2-1.5L7 6.2c-.5.4-.9.8-1.2 1.3z" fill="#e6dfee"/><circle cx="17.3" cy="6.6" r="1.9" fill="#c5bdcf"/></svg>
<svg class="ic" style="left:1251.33px;top:563.13px;width:16.07px;height:14.6px" viewBox="1.5 3.8 29 25.8" preserveAspectRatio="none" aria-hidden="true"><path d="M1.5 6.4C4.18 6.4 6.07 3.8 8.75 3.8C11.43 3.8 13.32 6.4 16 6.4C18.68 6.4 20.57 3.8 23.25 3.8C25.93 3.8 27.82 6.4 30.5 6.4L30.5 29.6C27.82 29.6 25.93 27 23.25 27C20.57 27 18.68 29.6 16 29.6C13.32 29.6 11.43 27 8.75 27C6.07 27 4.18 29.6 1.5 29.6z" fill="#f3e0f1"/><path d="M3 8.1C4.18 8.1 6.07 5.5 8.75 5.5L8.75 25.3C6.07 25.3 4.18 27.9 3 27.9z" fill="#48a5f5"/><path d="M8.75 5.5C11.43 5.5 13.32 8.1 16 8.1L16 27.9C13.32 27.9 11.43 25.3 8.75 25.3z" fill="#2384dc"/><path d="M16 8.1C18.68 8.1 20.57 5.5 23.25 5.5L23.25 25.3C20.57 25.3 18.68 27.9 16 27.9z" fill="#48a5f5"/><path d="M23.25 5.5C25.93 5.5 27.82 8.1 29 8.1L29 27.9C27.82 27.9 25.93 25.3 23.25 25.3z" fill="#2384dc"/><path d="M4.4 11.6c1.4-1.4 3.4-2 5.1-1.5l3.6-.9c.7 1.3-.4 2.7-2 3.3.5 1.3-.5 2.7-2.2 3.1 1.2 1.4 2.7 1.8 3.2 3.4-.4 1.9-1.9 2.8-2.9 4.6-1.2-1.3-.9-3.6-1.8-5.4-1.4-1.6-2.9-3.5-3-6.6zM15 14c1.2-2.3 3.2-2.7 5-4 1.9-.8 4.5-.5 6 .6.6 1.7-.6 2.8-.6 4.4-1.2 1-2.1 2.3-3.4 2.5-1.2.8-2.3.7-2.9 2.3-.3 1.7-.3 3.6-1.8 4.1-1.6-.9-.9-3.2-2-4.7-1-1.5-1.4-3.3-.3-5.2zM23 20h3.3l-.5 1.6h-2.1zM23.2 23.8c.8-1.3 2.2-1.3 2.9.1-.3 1.1-2.3 1.2-2.9-.1z" fill="#52d986"/></svg>
<svg class="ic" style="left:1273.73px;top:562px;width:16.07px;height:16px" viewBox="5 3.4 24.4 24.6" preserveAspectRatio="none" aria-hidden="true"><path fill-rule="evenodd" d="M5 5.5c0-1.9 2.1-2.8 3.5-1.5l20.3 20.6c1.3 1.3.4 3.4-1.4 3.4H7c-1.1 0-2-.9-2-2zM11 15.3v7.1h6.6z" fill="#c9c3d1"/><g fill="#a06cf2"><circle cx="8.6" cy="6.6" r=".85"/><circle cx="11.2" cy="9.3" r=".85"/><circle cx="13.8" cy="12" r=".85"/><circle cx="16.4" cy="14.7" r=".85"/><circle cx="19" cy="17.4" r=".85"/><circle cx="21.6" cy="20.1" r=".85"/><circle cx="24.2" cy="22.8" r=".85"/><circle cx="26.6" cy="25.3" r=".85"/></g></svg>
<svg class="ic" style="left:1383.87px;top:562.87px;width:16.07px;height:15.73px" viewBox="0 0 28 28" preserveAspectRatio="none" aria-hidden="true"><defs><linearGradient id="wvg28" x1="0" y1="0" x2="0" y2="1"><stop offset="0" stop-color="#4cc4fa"/><stop offset="1" stop-color="#3a7df5"/></linearGradient><radialGradient id="wvr28" cx="15.9" cy="13.9" r="11" gradientUnits="userSpaceOnUse"><stop offset=".66" stop-color="#52cbfb"/><stop offset="1" stop-color="#52cbfb" stop-opacity="0"/></radialGradient></defs><path id="wvp28" d="M0 28V12.5C0 5.5 5.3 0 12 0c4.8 0 8.6 2.3 10.8 6l-1.4 2.8A7.6 7.6 0 0 0 15.9 6.3a7.6 7.6 0 1 0 6.9 10.8L28 15.3V28z" fill="url(#wvg28)"/><path d="M0 28V12.5C0 5.5 5.3 0 12 0c4.8 0 8.6 2.3 10.8 6l-1.4 2.8A7.6 7.6 0 0 0 15.9 6.3a7.6 7.6 0 1 0 6.9 10.8L28 15.3V28z" fill="url(#wvr28)"/><path d="M10 7.2c0-1.3 1-2.2 2.3-2.2.6-.8 1.8-.9 2.6-.3.9-.7 2.1-.5 2.8.3.9-.5 2-.2 2.5.6 1.3 0 2.3.9 2.5 2 .9.4 1.3 1.5.8 2.4-.6.9-1.7 1-2.4.4-.7.5-1.6.4-2.2-.2-.8.5-1.8.3-2.4-.4-.9.5-1.9.3-2.5-.4-.8.5-1.9.4-2.5-.3-1.3.1-2.3-.7-2.3-1.9z" fill="#bdf1ff"/><circle cx="24.9" cy="7.1" r="1.15" fill="#bdf1ff"/><circle cx="24.6" cy="12.6" r="1.15" fill="#bdf1ff"/><circle cx="15.2" cy="12" r="1.05" fill="#bdf1ff"/></svg>
<svg class="ic" style="left:1405.93px;top:562.47px;width:16px;height:15.73px" viewBox="1 1 30 30" preserveAspectRatio="none" aria-hidden="true"><g fill="#d5c9e1"><rect x="12.9" y="1" width="6.2" height="9" rx="2.6" transform="rotate(0 16 16)"/><rect x="12.9" y="1" width="6.2" height="9" rx="2.6" transform="rotate(45 16 16)"/><rect x="12.9" y="1" width="6.2" height="9" rx="2.6" transform="rotate(90 16 16)"/><rect x="12.9" y="1" width="6.2" height="9" rx="2.6" transform="rotate(135 16 16)"/><rect x="12.9" y="1" width="6.2" height="9" rx="2.6" transform="rotate(180 16 16)"/><rect x="12.9" y="1" width="6.2" height="9" rx="2.6" transform="rotate(225 16 16)"/><rect x="12.9" y="1" width="6.2" height="9" rx="2.6" transform="rotate(270 16 16)"/><rect x="12.9" y="1" width="6.2" height="9" rx="2.6" transform="rotate(315 16 16)"/><path fill-rule="evenodd" d="M16 5.8a10.2 10.2 0 1 0 0 20.4 10.2 10.2 0 0 0 0-20.4zm0 6.2a4 4 0 1 1 0 8 4 4 0 0 1 0-8z"/></g><circle cx="16" cy="16" r="5.9" fill="none" stroke="#b9adc7" stroke-width="3" opacity=".75"/></svg>
<svg class="ic" style="left:1515.93px;top:562.73px;width:16.27px;height:15.4px" viewBox="1 3 28.5 26" preserveAspectRatio="none" aria-hidden="true"><defs><linearGradient id="fdg30" x1="0" y1="0" x2="0" y2="1"><stop offset="0" stop-color="#ffd84d"/><stop offset="1" stop-color="#ffb83a"/></linearGradient></defs><rect x="16.5" y="3" width="6.5" height="3.5" rx="1.7" fill="#3fd37a"/><rect x="1.5" y="4.8" width="27.5" height="8" rx="2.2" fill="#ffcf45"/><rect x="11.5" y="7" width="7" height="1.5" rx=".75" fill="#3f8ff2"/><rect x="1.5" y="9" width="27.5" height="8" rx="2.2" fill="#ffd24a"/><rect x="6" y="11" width="7" height="2.2" rx="1.1" fill="#f0325f"/><rect x="1" y="13" width="28.5" height="16" rx="2.2" fill="url(#fdg30)"/></svg>
<svg class="ic" style="left:1538.07px;top:563.27px;width:16.07px;height:14.87px" viewBox="2 2.7 27 25.8" preserveAspectRatio="none" aria-hidden="true"><path d="M22.5 3.5l3-.8.6 2.8-3 .6z" fill="#4b3f5c"/><path d="M14.5 11.5l4-6 7.8-1.8.9 7.8z" fill="#ebe4f1"/><path d="M15.5 9.2h6l.8-2.2h-5.3zM23.3 7l-.6 2.2h2.3l-.3-2.2z" fill="#38c6f5"/><path d="M12.5 12.8l15.5-1.5.5 6.7H4.5L2 14.8l10.5 1.7z" fill="#d9d0e3"/><path d="M2 14.8l10.5-2 15.5-1.5.3 3.2-13.5 1.3z" fill="#f2ecf7"/><g fill="#38c6f5"><circle cx="14.5" cy="16.8" r="1"/><circle cx="18" cy="16.8" r="1"/><circle cx="21.5" cy="16.8" r="1"/><circle cx="25" cy="16.8" r="1"/></g><path d="M4.3 18.8h24.4l-.4 7.7H6.8z" fill="#e83a55"/><path d="M4.3 18.8h24.4l-.1 1.2H4.7z" fill="#b82844"/><path d="M2 26.5c1.5-1.7 3-1.7 4.5 0 1.5-1.7 3-1.7 4.5 0 1.5-1.7 3-1.7 4.5 0 1.5-1.7 3-1.7 4.5 0 1.5-1.7 3-1.7 4.5 0 1.5-1.7 3-1.7 4.5 0v2H2z" fill="#3f95f2"/></svg>
<svg class="ic" style="left:64.47px;top:687.8px;width:12.4px;height:10.27px" viewBox="0 2.2 27.4 24.3" preserveAspectRatio="none" aria-hidden="true"><path d="M8.6 16.8l9.2 2.3v7.4H2.8z" fill="#fbe034"/><path d="M8.6 16.8l9.2 2.3v2l-10.6-1.5z" fill="#f0c52a"/><g transform="rotate(19 14 12)"><ellipse cx="14" cy="14.3" rx="13.9" ry="5.2" fill="#7f7888"/><ellipse cx="14" cy="12" rx="14" ry="4.8" fill="#cdc7d3"/><path d="M7.8 9.6C7.8 5.1 10.6 2 14 2s6.2 3.1 6.2 7.6c-1.7 1.3-10.7 1.3-12.4 0z" fill="#3fc0f2"/><path d="M16 3.6c1.4.6 2.4 1.9 2.9 3.5" stroke="#c8f1ff" stroke-width="1.1" fill="none" stroke-linecap="round"/><g fill="#3e3453"><ellipse cx="3.6" cy="12.7" rx="1" ry=".8"/><ellipse cx="8.3" cy="14.5" rx="1.1" ry=".9"/><ellipse cx="14" cy="15.2" rx="1.1" ry=".9"/><ellipse cx="19.7" cy="14.5" rx="1.1" ry=".9"/><ellipse cx="24.4" cy="12.7" rx="1" ry=".8"/></g></g></svg>
<svg class="ic" style="left:890.07px;top:685.6px;width:12.13px;height:12.27px" viewBox="1.5 4.9 25.6 25.6" preserveAspectRatio="none" aria-hidden="true"><g transform="rotate(-45 16 16)"><path fill="#3f8ff2" d="M14.5 13.5L9.5 2h3.8l8.2 11.5zM14.5 18.5L9.5 30h3.8l8.2-11.5zM4.5 13.8L2.5 9h2.6l3.4 4.8zM4.5 18.2L2.5 23h2.6l3.4-4.8z"/><path fill="#cdbfe0" d="M2.5 16c0-1.5 1-2.7 2.5-2.7h20.5c3 0 5.5 1.2 5.5 2.7s-2.5 2.7-5.5 2.7H5c-1.5 0-2.5-1.2-2.5-2.7z"/><path fill="#8ed4ff" d="M26.5 13.6c1.7.3 3.2 1 3.9 2h-4.8c0-.8.3-1.5.9-2z"/><path fill="#3f8ff2" d="M2.6 15.3h6v1.4h-6z"/></g></svg>
<svg class="ic" style="left:1715.53px;top:686.47px;width:11.67px;height:10.73px" viewBox="0.1 1.6 31.8 28.8" preserveAspectRatio="none" aria-hidden="true"><g transform="rotate(40 16 16)"><rect x="-1" y="11" width="11.5" height="10" rx="1" fill="#3a2d5a"/><rect x="21.5" y="11" width="11.5" height="10" rx="1" fill="#3a2d5a"/><g fill="#8a55e0"><rect x=".3" y="12.3" width="2.5" height="3"/><rect x="3.7" y="12.3" width="2.5" height="3"/><rect x="7" y="12.3" width="2.5" height="3"/><rect x=".3" y="16.7" width="2.5" height="3"/><rect x="3.7" y="16.7" width="2.5" height="3"/><rect x="7" y="16.7" width="2.5" height="3"/><rect x="22.5" y="12.3" width="2.5" height="3"/><rect x="25.9" y="12.3" width="2.5" height="3"/><rect x="29.2" y="12.3" width="2.5" height="3"/><rect x="22.5" y="16.7" width="2.5" height="3"/><rect x="25.9" y="16.7" width="2.5" height="3"/><rect x="29.2" y="16.7" width="2.5" height="3"/></g><rect x="10.5" y="14.5" width="11" height="3" fill="#8b8494"/><rect x="11.3" y="8.5" width="9.4" height="15" rx="2.2" fill="#cfc8d8"/><rect x="11.3" y="8.5" width="3" height="15" rx="1.5" fill="#aaa2b5"/><path d="M16 23.5v3" stroke="#aaa2b5" stroke-width="1.6"/><path d="M11.5 27a4.5 3.6 0 0 1 9 0z" fill="#f2ecf7"/><circle cx="16" cy="29.3" r="1.1" fill="#dcd4e6"/></g></svg>
</div>
</body>
</html>
